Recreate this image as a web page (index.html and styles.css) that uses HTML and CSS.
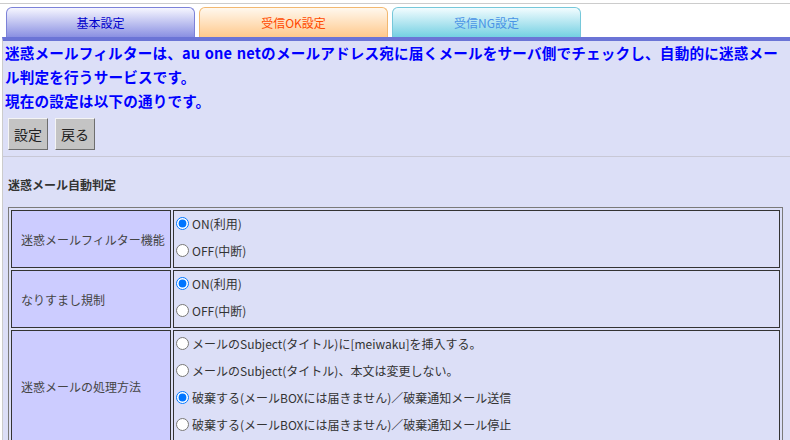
FILE: index.html
```html
<!DOCTYPE html>
<html lang="ja">
    <head>
        <meta charset="utf-8">
        <link rel="stylesheet" href="styles.css">
    </head>
<body>
    <div class="topLine"></div>
    <div class="tabs">
        <a class="tab tabBasic" href="#">基本設定</a>
        <a class="tab tabOk" href="#">受信OK設定</a>
        <a class="tab tabNg" href="#">受信NG設定</a>
    </div>
    <div class="page">
        <p class="intro">迷惑メールフィルターは、au one netのメールアドレス宛に届くメールをサーバ側でチェックし、自動的に迷惑メール判定を行うサービスです。<br>現在の設定は以下の通りです。</p>
        <div class="buttons">
            <button class="btn">設定</button>
            <button class="btn">戻る</button>
        </div>
        <div class="section">
            <h3 class="sectionTitle">迷惑メール自動判定</h3>
            <table class="settings">
                <tr>
                    <th>迷惑メールフィルター機能</th>
                    <td>
                        <label class="option"><input type="radio" name="filter" checked>ON(利用)</label>
                        <label class="option"><input type="radio" name="filter">OFF(中断)</label>
                    </td>
                </tr>
                <tr>
                    <th>なりすまし規制</th>
                    <td>
                        <label class="option"><input type="radio" name="spoof" checked>ON(利用)</label>
                        <label class="option"><input type="radio" name="spoof">OFF(中断)</label>
                    </td>
                </tr>
                <tr>
                    <th>迷惑メールの処理方法</th>
                    <td>
                        <label class="option"><input type="radio" name="action">メールのSubject(タイトル)に[meiwaku]を挿入する。</label>
                        <label class="option"><input type="radio" name="action">メールのSubject(タイトル)、本文は変更しない。</label>
                        <label class="option"><input type="radio" name="action" checked>破棄する(メールBOXには届きません)／破棄通知メール送信</label>
                        <label class="option"><input type="radio" name="action">破棄する(メールBOXには届きません)／破棄通知メール停止</label>
                    </td>
                </tr>
            </table>
        </div>
    </div>
</body>
</html>
```

FILE: styles.css
```css
body {
    margin: 0;
    background-color: white;
    font-family: "Noto Sans CJK JP", "Noto Sans", sans-serif;
    color: #333;
    overflow: hidden;
}

.topLine {
    height: 3px;
    border-bottom: 1px solid #cccccc;
}

.tabs {
    display: flex;
    gap: 4px;
    padding: 3px 0 0 6px;
}

.tab {
    width: 187px;
    height: 29px;
    line-height: 29px;
    text-align: center;
    font-size: 12px;
    text-decoration: none;
    border: 1px solid;
    border-bottom: none;
    border-radius: 6px 6px 0 0;
}

.tabBasic {
    color: #0000cc;
    border-color: #7c82d8;
    background: linear-gradient(#f6f6ff, #8a90e2);
}

.tabOk {
    color: #ff4a00;
    border-color: #f2b870;
    background: linear-gradient(#fff8ee, #ffc98c);
}

.tabNg {
    color: #4a94e6;
    border-color: #76c8da;
    background: linear-gradient(#f2fcff, #74d0e2);
}

.page {
    margin-left: 2px;
    border-left: 1px solid #cccccc;
    border-top: 4px solid #6b74d6;
    background-color: #dcdff7;
    min-height: 400px;
}

.intro {
    margin: 0;
    padding: 0 2px 0 2px;
    font-size: 14.6px;
    font-weight: bold;
    line-height: 24px;
    letter-spacing: 0.18px;
    word-spacing: 1px;
    color: #0000ff;
}

.buttons {
    display: flex;
    gap: 7px;
    padding: 5px 5px 6px;
}

.btn {
    height: 32px;
    padding: 0 5px;
    font-family: inherit;
    font-size: 14px;
    color: #222;
    background-color: #c4c4c4;
    border: 1px solid;
    border-color: #f4f4f4 #6e6e6e #6e6e6e #f4f4f4;
}

.section {
    border-top: 1px solid #c8c8d6;
    padding: 0 7px 0 5px;
}

.sectionTitle {
    margin: 0;
    padding: 18px 0 12px;
    font-size: 12px;
    line-height: 20px;
    color: #333;
}

.settings {
    width: 100%;
    border: 1px solid #7a7a7a;
    border-spacing: 2px;
    font-size: 12px;
}

.settings th {
    width: 149px;
    padding: 0 0 0 9px;
    text-align: left;
    font-weight: normal;
    color: #444;
    background-color: #ccccff;
    border: 1px solid #333;
}

.settings td {
    padding: 1px 0;
    background-color: #dcdff7;
    border: 1px solid #333;
}

.option {
    display: flex;
    align-items: center;
    height: 22px;
    padding-bottom: 5px;
    color: #333;
}

.option input {
    width: 13px;
    height: 13px;
    margin: 0 3px 0 2px;
}
```
